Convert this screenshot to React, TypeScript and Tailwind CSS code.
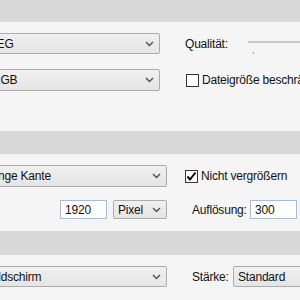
const Chevron = () => (
  <svg width="9" height="6" viewBox="0 0 9 6" className="shrink-0">
    <polyline points="1,1 4.5,4.5 8,1" fill="none" stroke="#505050" strokeWidth="1.4" />
  </svg>
);

const Select = ({ label, className }: { label: string; className: string }) => (
  <div
    className={`flex shrink-0 items-center justify-between rounded-[2px] border border-[#acacac] bg-gradient-to-b from-[#f0f0f0] to-[#e5e5e5] pl-[4px] pr-[5px] ${className}`}
  >
    <span className="whitespace-nowrap">{label}</span>
    <Chevron />
  </div>
);

const Checkbox = ({ checked }: { checked?: boolean }) => (
  <div className="flex h-[13px] w-[13px] shrink-0 items-center justify-center border border-[#333] bg-white">
    {checked && (
      <svg width="11" height="11" viewBox="0 0 11 11">
        <polyline points="1.5,5.5 4,8.5 9.5,1.5" fill="none" stroke="#000" strokeWidth="2" />
      </svg>
    )}
  </div>
);

const Band = ({ className }: { className: string }) => (
  <div className={`w-full shrink-0 bg-[#d8d8d8] ${className}`} />
);

const App = () => {
  return (
    <div className="flex h-[300px] w-[300px] flex-col overflow-hidden bg-[#f5f5f5] font-['Liberation_Sans',sans-serif] text-[12px] tracking-[-0.2px] text-[#111]">
      <Band className="h-[22px]" />

      {/* format */}
      <div className="mt-[11px] flex h-[21px] shrink-0 items-center">
        <Select label="JPEG" className="ml-[-22px] h-[21px] w-[182px]" />
        <span className="ml-[25px] w-[63px] shrink-0">Qualität:</span>
        <div className="flex h-[21px] min-w-[52px] flex-1 flex-col">
          <div className="mt-[8px] h-[3px] w-full border border-[#c8c8c8] bg-[#e6e6e6]" />
          <div className="ml-[5px] mt-[9px] h-[5px] w-px bg-[#a0a0a0]" />
        </div>
      </div>

      <div className="mt-[15px] flex h-[22px] shrink-0 items-center">
        <Select label="RGB" className="ml-[-13px] h-[22px] w-[173px]" />
        <div className="ml-[26px] flex shrink-0 items-center gap-[3px]">
          <Checkbox />
          <span className="whitespace-nowrap">Dateigröße beschränken</span>
        </div>
      </div>

      <Band className="mt-[40px] h-[23px]" />

      {/* size */}
      <div className="mt-[11px] flex h-[22px] shrink-0 items-center">
        <Select label="Lange Kante" className="ml-[-20px] h-[22px] w-[187px]" />
        <div className="ml-[18px] flex shrink-0 items-center gap-[3px]">
          <Checkbox checked />
          <span className="whitespace-nowrap">Nicht vergrößern</span>
        </div>
      </div>

      <div className="mt-[13px] flex h-[19px] shrink-0 items-center">
        <div className="ml-[60px] flex h-[19px] w-[47px] shrink-0 items-center border border-[#a9bcd3] bg-white pl-[4px]">
          1920
        </div>
        <Select label="Pixel" className="ml-[6px] h-[19px] w-[54px]" />
        <span className="ml-[25px] w-[58px] shrink-0">Auflösung:</span>
        <div className="flex h-[19px] w-[47px] shrink-0 items-center border border-[#a9bcd3] bg-white pl-[4px]">
          300
        </div>
      </div>

      <Band className="mt-[12px] h-[24px]" />

      {/* sharpen */}
      <div className="mt-[11px] flex h-[21px] shrink-0 items-center">
        <Select label="Bildschirm" className="ml-[-17px] h-[21px] w-[184px]" />
        <span className="ml-[25px] w-[41px] shrink-0">Stärke:</span>
        <div className="flex h-[21px] w-[80px] shrink-0 items-center rounded-[2px] border border-[#acacac] bg-gradient-to-b from-[#f0f0f0] to-[#e5e5e5] pl-[4px]">
          Standard
        </div>
      </div>
    </div>
  );
};

export default App;
